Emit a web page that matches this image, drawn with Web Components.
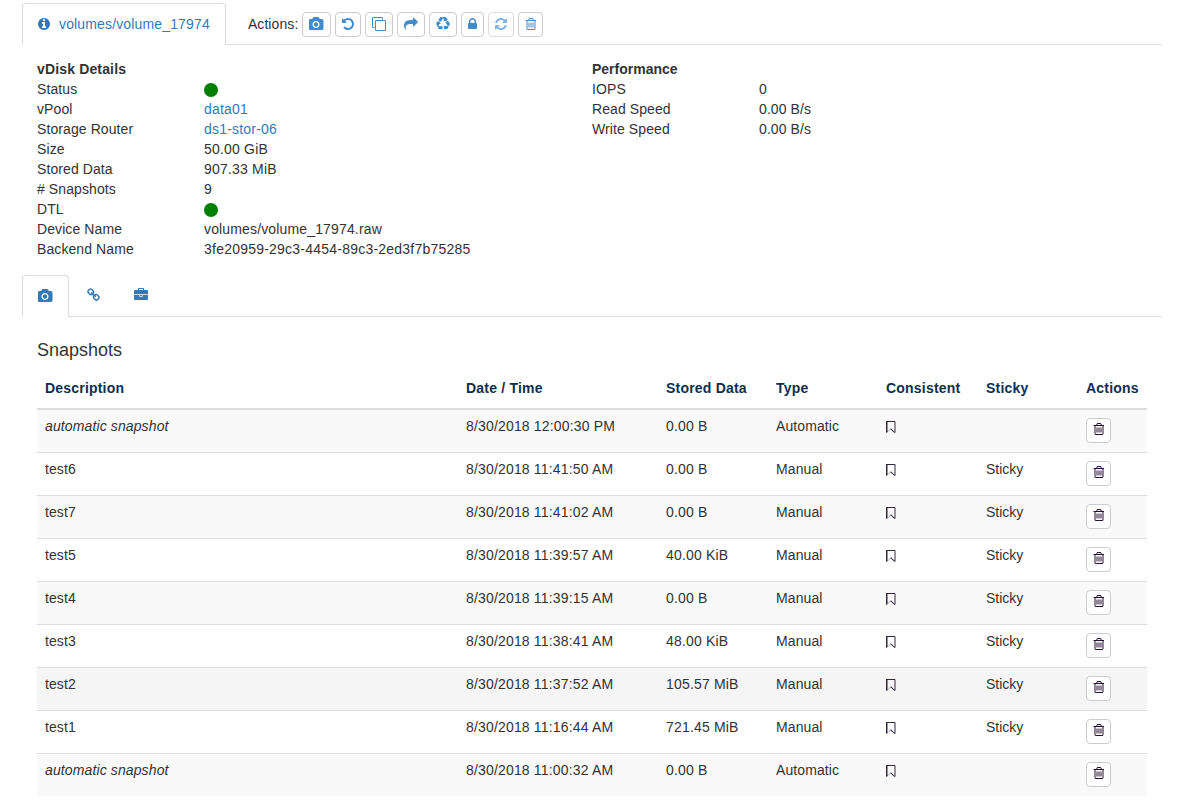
<!DOCTYPE html>
<html>
<head>
<meta charset="utf-8">
<title>volumes/volume_17974</title>
<style>
    html, body { margin: 0; padding: 0; background: #fff; }
    body { font: 14px/20px "Liberation Sans", Arial, sans-serif; color: #333; letter-spacing: .09px; }
</style>
</head>
<body>
<vd-page>
    <vd-tabbar first>
        <vd-tab active icon="info" label="volumes/volume_17974"></vd-tab>
        <vd-actions></vd-actions>
    </vd-tabbar>

    <vd-details></vd-details>

    <vd-tabbar second>
        <vd-tab active icon="camera"></vd-tab>
        <vd-tab icon="link"></vd-tab>
        <vd-tab icon="briefcase" style="margin-left:-1px"></vd-tab>
    </vd-tabbar>

    <vd-snapshots></vd-snapshots>
</vd-page>

<script>
const ICONS = {
    info: [1536, 'M1152 1376v-160q0-14-9-23t-23-9h-96v-512q0-14-9-23t-23-9h-320q-14 0-23 9t-9 23v160q0 14 9 23t23 9h96v320h-96q-14 0-23 9t-9 23v160q0 14 9 23t23 9h448q14 0 23-9t9-23zm-128-896v-160q0-14-9-23t-23-9h-192q-14 0-23 9t-9 23v160q0 14 9 23t23 9h192q14 0 23-9t9-23zm640 416q0 209-103 385.5t-279.5 279.5-385.5 103-385.5-103-279.5-279.5-103-385.5 103-385.5 279.5-279.5 385.5-103 385.5 103 279.5 279.5 103 385.5z', 128],
    camera: [1920, 'M896 672q119 0 203.5 84.5t84.5 203.5-84.5 203.5-203.5 84.5-203.5-84.5-84.5-203.5 84.5-203.5 203.5-84.5zm704-416q106 0 181 75t75 181v896q0 106-75 181t-181 75h-1408q-106 0-181-75t-75-181v-896q0-106 75-181t181-75h224l51-136q19-49 69.5-84.5t103.5-35.5h512q53 0 103.5 35.5t69.5 84.5l51 136h224zm-704 1152q185 0 316.5-131.5t131.5-316.5-131.5-316.5-316.5-131.5-316.5 131.5-131.5 316.5 131.5 316.5 316.5 131.5z', 0],
    undo: [1536, 'M1664 896q0 156-61 298t-164 245-245 164-298 61q-172 0-327-72.5t-264-204.5q-7-10-6.5-22.5t8.5-20.5l137-138q10-9 25-9 16 2 23 12 73 95 179 147t225 52q104 0 198.5-40.5t163.5-109.5 109.5-163.5 40.5-198.5-40.5-198.5-109.5-163.5-163.5-109.5-198.5-40.5q-98 0-188 35.5t-160 101.5l137 138q31 30 14 69-17 40-59 40h-448q-26 0-45-19t-19-45v-448q0-42 40-59 39-17 69 14l130 129q107-101 244.5-156.5t284.5-55.5q156 0 298 61t245 164 164 245 61 298z', 128],
    clone: [1792, 'M1664 1632v-1088q0-13-9.5-22.5t-22.5-9.5h-1088q-13 0-22.5 9.5t-9.5 22.5v1088q0 13 9.5 22.5t22.5 9.5h1088q13 0 22.5-9.5t9.5-22.5zm128-1088v1088q0 66-47 113t-113 47h-1088q-66 0-113-47t-47-113v-1088q0-66 47-113t113-47h1088q66 0 113 47t47 113zm-384-384v160h-128v-160q0-13-9.5-22.5t-22.5-9.5h-1088q-13 0-22.5 9.5t-9.5 22.5v1088q0 13 9.5 22.5t22.5 9.5h160v128h-160q-66 0-113-47t-47-113v-1088q0-66 47-113t113-47h1088q66 0 113 47t47 113z', 0],
    share: [1792, 'M1792 640q0 26-19 45l-512 512q-19 19-45 19t-45-19-19-45v-256h-224q-98 0-175.5 6t-154 21.5-133 42.5-105.5 69.5-80 101-48.5 138.5-17.5 181q0 55 5 123 0 6 2.5 23.5t2.5 26.5q0 15-8.5 25t-23.5 10q-16 0-28-17-7-9-13-22t-13.5-30-10.5-24q-127-285-127-451 0-199 53-333 162-403 875-403h224v-256q0-26 19-45t45-19 45 19l512 512q19 19 19 45z', 0],
    recycle: [1792, 'M836 1169l-15 368-2 22-420-29q-36-3-67-31.5t-47-65.5q-11-27-14.5-55t4-65 12-55 21.5-64 19-53q78 12 509 28zm-387-586l180 379-147-92q-63 72-111.5 144.5t-72.5 125-39.5 94.5-18.5 63l-4 21-190-357q-17-26-18-56t6-47l8-18q35-63 114-188l-140-86zm1231 517l-188 359q-12 29-36.5 46.5t-43.5 20.5l-18 4q-71 7-219 12l8 164-230-367 211-362 7 173q170 16 283 5t170-33zm-785-924q-47 63-265 435l-317-187-19-12 225-356q20-31 60-45t80-10q24 2 48.5 12t42 21 41.5 33 36 34.5 36 39.5 32 35zm655 307l212 363q18 37 12.5 76t-27.5 74q-13 20-33 37t-38 28-48.5 22-47 16-51.5 14-46 12q-34-72-265-436l313-195zm-143-226l142-83-220 373-419-20 151-86q-34-89-75-166t-75.5-123.5-64.5-80-47-46.5l-17-13 405 1q31-3 58 10.5t39 28.5l11 15q39 61 112 190z', 0],
    lock: [1152, 'M320 768h512v-192q0-106-75-181t-181-75-181 75-75 181v192zm832 96v576q0 40-28 68t-68 28h-960q-40 0-68-28t-28-68v-576q0-40 28-68t68-28h32v-192q0-184 132-316t316-132 316 132 132 316v192h32q40 0 68 28t28 68z', 0],
    refresh: [1536, 'M1639 1056q0 5-1 7-64 268-268 434.5t-478 166.5q-146 0-282.5-55t-243.5-157l-129 129q-19 19-45 19t-45-19-19-45v-448q0-26 19-45t45-19h448q26 0 45 19t19 45-19 45l-137 137q71 66 161 102t187 36q134 0 250-65t186-179q11-17 53-117 8-23 30-23h192q13 0 22.5 9.5t9.5 22.5zm25-800v448q0 26-19 45t-45 19h-448q-26 0-45-19t-19-45 19-45l138-138q-148-137-349-137-134 0-250 65t-186 179q-11 17-53 117-8 23-30 23h-199q-13 0-22.5-9.5t-9.5-22.5v-7q65-268 270-434.5t480-166.5q146 0 284 55.5t245 156.5l130-129q19-19 45-19t45 19 19 45z', 128],
    trash: [1408, 'M704 736v576q0 14-9 23t-23 9h-64q-14 0-23-9t-9-23v-576q0-14 9-23t23-9h64q14 0 23 9t9 23zm256 0v576q0 14-9 23t-23 9h-64q-14 0-23-9t-9-23v-576q0-14 9-23t23-9h64q14 0 23 9t9 23zm256 0v576q0 14-9 23t-23 9h-64q-14 0-23-9t-9-23v-576q0-14 9-23t23-9h64q14 0 23 9t9 23zm128 724v-948h-896v948q0 22 7 40.5t14.5 27 10.5 8.5h832q3 0 10.5-8.5t14.5-27 7-40.5zm-672-1076h448l-48-117q-7-9-17-11h-317q-10 2-17 11zm928 32v64q0 14-9 23t-23 9h-96v948q0 83-47 143.5t-113 60.5h-832q-66 0-113-58.5t-47-141.5v-952h-96q-14 0-23-9t-9-23v-64q0-14 9-23t23-9h309l70-167q15-37 54-63t79-26h320q40 0 79 26t54 63l70 167h309q14 0 23 9t9 23z', 128],
    bookmark: [1280, 'M1344 256h-896v1243l448-430 89 86 359 344v-1243zm12-128q23 0 44 9 33 13 52.5 41t19.5 62v1289q0 34-19.5 62t-52.5 41q-19 8-44 8-48 0-83-32l-441-424-441 424q-36 33-83 33-23 0-44-9-33-13-52.5-41t-19.5-62v-1289q0-34 19.5-62t52.5-41q21-9 44-9h1048z', 256],
    link: [1792, 'M1456 1216q0-40-28-68l-208-208q-28-28-68-28-42 0-72 32 3 3 19 18.5t21.5 21.5 15 19 13 25.5 3.5 27.5q0 40-28 68t-68 28q-15 0-27.5-3.5t-25.5-13-19-15-21.5-21.5-18.5-19q-33 31-33 73 0 40 28 68l206 207q27 27 68 27 40 0 68-26l147-146q28-28 28-67zm-703-705q0-40-28-68l-206-207q-28-28-68-28-39 0-68 27l-147 146q-28 28-28 67 0 40 28 68l208 208q27 27 68 27 42 0 72-31-3-3-19-18.5t-21.5-21.5-15-19-13-25.5-3.5-27.5q0-40 28-68t68-28q15 0 27.5 3.5t25.5 13 19 15 21.5 21.5 18.5 19q33-31 33-73zm895 705q0 120-85 203l-147 146q-83 83-203 83-121 0-204-85l-206-207q-83-83-83-203 0-123 88-209l-88-88q-86 88-208 88-120 0-204-84l-208-208q-84-84-84-204t85-203l147-146q83-83 203-83 121 0 204 85l206 207q83 83 83 203 0 123-88 209l88 88q86-88 208-88 120 0 204 84l208 208q84 84 84 204z', 0],
    briefcase: [1792, 'M640 256h512v-128h-512v128zm1152 640v480q0 66-47 113t-113 47h-1472q-66 0-113-47t-47-113v-480h672v160q0 26 19 45t45 19h320q26 0 45-19t19-45v-160h672zm-768 0v128h-256v-128h256zm768-480v384h-1792v-384q0-66 47-113t113-47h352v-160q0-40 28-68t68-28h576q40 0 68 28t28 68v160h352q66 0 113 47t47 113z', 0]
};

class VdIcon extends HTMLElement {
    constructor() {
        super();
        this.attachShadow({ mode: 'open' });
    }

    connectedCallback() {
        const [w, d, x] = ICONS[this.getAttribute('name')];
        const size = 14;
        this.shadowRoot.innerHTML = `
            <style>
                :host { display: inline-flex; color: inherit; line-height: 0; }
                svg { display: block; fill: currentColor; }
            </style>
            <svg width="${w / 1792 * size}" height="${size}" viewBox="${x} 0 ${w} 1792"><path d="${d}"/></svg>
        `;
    }
}
customElements.define('vd-icon', VdIcon);

class VdPage extends HTMLElement {
    constructor() {
        super();
        this.attachShadow({ mode: 'open' });
        this.shadowRoot.innerHTML = `
            <style>
                :host { display: block; width: 1140px; margin-left: 22px; padding-top: 3px; }
            </style>
            <slot></slot>
        `;
    }
}
customElements.define('vd-page', VdPage);

class VdTabbar extends HTMLElement {
    constructor() {
        super();
        this.attachShadow({ mode: 'open' });
        this.shadowRoot.innerHTML = `
            <style>
                :host { display: flex; align-items: flex-start; border-bottom: 1px solid #ddd; height: 41px; }
                :host([second]) { margin-top: 16px; gap: 2px; }
            </style>
            <slot></slot>
        `;
    }
}
customElements.define('vd-tabbar', VdTabbar);

class VdTab extends HTMLElement {
    constructor() {
        super();
        this.attachShadow({ mode: 'open' });
    }

    connectedCallback() {
        const label = this.getAttribute('label');
        this.shadowRoot.innerHTML = `
            <style>
                :host {
                    display: flex;
                    align-items: center;
                    gap: 9px;
                    box-sizing: border-box;
                    height: 41px;
                    padding: 0 15px 2px;
                    border: 1px solid transparent;
                    border-bottom: 0;
                    border-radius: 4px 4px 0 0;
                    color: #337ab7;
                    letter-spacing: .15px;
                }
                :host([active]) { border-color: #ddd; background: #fff; height: 42px; }
            </style>
            <vd-icon name="${this.getAttribute('icon')}"></vd-icon>
            ${label ? `<span>${label}</span>` : ''}
        `;
    }
}
customElements.define('vd-tab', VdTab);

class VdButton extends HTMLElement {
    constructor() {
        super();
        this.attachShadow({ mode: 'open' });
    }

    connectedCallback() {
        this.shadowRoot.innerHTML = `
            <style>
                :host {
                    display: inline-flex;
                    align-items: center;
                    justify-content: center;
                    box-sizing: border-box;
                    height: 25px;
                    padding-bottom: var(--btn-lift, 1px);
                    border: 1px solid #ccc;
                    border-radius: 4px;
                    background: #fff;
                    color: var(--btn-color, #428bca);
                }
                :host([disabled]) { opacity: .65; }
            </style>
            <vd-icon name="${this.getAttribute('icon')}"></vd-icon>
        `;
    }
}
customElements.define('vd-button', VdButton);

class VdActions extends HTMLElement {
    constructor() {
        super();
        this.attachShadow({ mode: 'open' });
        const buttons = [
            ['camera', 29], ['undo', 26], ['clone', 28], ['share', 28],
            ['recycle', 28], ['lock', 23], ['refresh', 26], ['trash', 25]
        ];
        this.shadowRoot.innerHTML = `
            <style>
                :host { display: flex; align-items: center; gap: 4px; margin-left: 22px; height: 25px; margin-top: 9px; }
                span { width: 50px; white-space: nowrap; position: relative; top: -1px; }
            </style>
            <span>Actions:</span>
            ${buttons.map(([icon, w]) => `<vd-button icon="${icon}" style="width:${w}px"${icon === 'refresh' ? ' disabled' : ''}></vd-button>`).join('')}
        `;
    }
}
customElements.define('vd-actions', VdActions);

class VdDetailRow extends HTMLElement {
    constructor() {
        super();
        this.attachShadow({ mode: 'open' });
    }

    connectedCallback() {
        this.shadowRoot.innerHTML = `
            <style>
                :host { display: flex; height: 20px; align-items: center; }
                .label { width: 167px; flex: none; }
            </style>
            <div class="label">${this.getAttribute('label')}</div>
            <slot></slot>
        `;
    }
}
customElements.define('vd-detail-row', VdDetailRow);

class VdDot extends HTMLElement {
    constructor() {
        super();
        this.attachShadow({ mode: 'open' });
        this.shadowRoot.innerHTML = `
            <style>
                :host { display: block; width: 14px; height: 14px; border-radius: 50%; background: #008000; margin-top: 2px; }
            </style>
        `;
    }
}
customElements.define('vd-dot', VdDot);

class VdDetails extends HTMLElement {
    constructor() {
        super();
        this.attachShadow({ mode: 'open' });
        this.shadowRoot.innerHTML = `
            <style>
                :host { display: grid; grid-template-columns: 555px 1fr; padding: 14px 0 0 15px; height: 200px; }
                h4 { margin: 0; font: bold 14px/20px "Liberation Sans", Arial, sans-serif; letter-spacing: .15px; }
                section:last-child h4 { letter-spacing: 0; }
                a { color: #337ab7; text-decoration: none; }
                .digits { letter-spacing: .2px; }
                .uuid { letter-spacing: .225px; }
            </style>
            <section>
                <h4>vDisk Details</h4>
                <vd-detail-row label="Status"><vd-dot></vd-dot></vd-detail-row>
                <vd-detail-row label="vPool"><a href="#" class="digits">data01</a></vd-detail-row>
                <vd-detail-row label="Storage Router"><a href="#" class="digits">ds1-stor-06</a></vd-detail-row>
                <vd-detail-row label="Size"><span class="digits">50.00 GiB</span></vd-detail-row>
                <vd-detail-row label="Stored Data"><span class="digits">907.33 MiB</span></vd-detail-row>
                <vd-detail-row label="# Snapshots">9</vd-detail-row>
                <vd-detail-row label="DTL"><vd-dot></vd-dot></vd-detail-row>
                <vd-detail-row label="Device Name"><span style="letter-spacing:.15px">volumes/volume_17974.raw</span></vd-detail-row>
                <vd-detail-row label="Backend Name"><span class="uuid">3fe20959-29c3-4454-89c3-2ed3f7b75285</span></vd-detail-row>
            </section>
            <section>
                <h4>Performance</h4>
                <vd-detail-row label="IOPS">0</vd-detail-row>
                <vd-detail-row label="Read Speed">0.00 B/s</vd-detail-row>
                <vd-detail-row label="Write Speed">0.00 B/s</vd-detail-row>
            </section>
        `;
    }
}
customElements.define('vd-details', VdDetails);

const COLUMNS = '421px 200px 110px 110px 100px 100px 69px';

class VdSnapshotRow extends HTMLElement {
    constructor() {
        super();
        this.attachShadow({ mode: 'open' });
    }

    connectedCallback() {
        const get = name => this.getAttribute(name) || '';
        this.shadowRoot.innerHTML = `
            <style>
                :host {
                    display: grid;
                    grid-template-columns: ${COLUMNS};
                    height: 42px;
                    border-top: 1px solid #ddd;
                    color: #333;
                }
                :host([odd]) { background: #f9f9f9; }
                :host([hover]) { background: #f5f5f5; }
                :host([first]) { border-top: 0; }
                div { padding: 6px 8px 0; }
                :host([auto]) .desc { font-style: italic; letter-spacing: .12px; }
                .date { letter-spacing: .17px; }
                .size { letter-spacing: .18px; }
                .sticky { letter-spacing: 0; }
                .mark { color: #33283d; padding-top: 9px; }
                .act { padding-top: 8px; --btn-color: #2a0f35; --btn-lift: 3px; }
            </style>
            <div class="desc">${get('desc')}</div>
            <div class="date">${get('date')}</div>
            <div class="size">${get('size')}</div>
            <div>${get('type')}</div>
            <div class="mark"><vd-icon name="bookmark"></vd-icon></div>
            <div class="sticky">${get('sticky')}</div>
            <div class="act"><vd-button icon="trash" style="width:25px"></vd-button></div>
        `;
    }
}
customElements.define('vd-snapshot-row', VdSnapshotRow);

class VdSnapshots extends HTMLElement {
    constructor() {
        super();
        this.attachShadow({ mode: 'open' });
        const rows = [
            ['automatic snapshot', '8/30/2018 12:00:30 PM', '0.00 B', 'Automatic', ''],
            ['test6', '8/30/2018 11:41:50 AM', '0.00 B', 'Manual', 'Sticky'],
            ['test7', '8/30/2018 11:41:02 AM', '0.00 B', 'Manual', 'Sticky'],
            ['test5', '8/30/2018 11:39:57 AM', '40.00 KiB', 'Manual', 'Sticky'],
            ['test4', '8/30/2018 11:39:15 AM', '0.00 B', 'Manual', 'Sticky'],
            ['test3', '8/30/2018 11:38:41 AM', '48.00 KiB', 'Manual', 'Sticky'],
            ['test2', '8/30/2018 11:37:52 AM', '105.57 MiB', 'Manual', 'Sticky'],
            ['test1', '8/30/2018 11:16:44 AM', '721.45 MiB', 'Manual', 'Sticky'],
            ['automatic snapshot', '8/30/2018 11:00:32 AM', '0.00 B', 'Automatic', '']
        ];
        const attrs = i => [
            i === 0 ? 'first' : '',
            i % 2 === 0 ? 'odd' : '',
            i === 6 ? 'hover' : '',
            rows[i][3] === 'Automatic' ? 'auto' : ''
        ].join(' ');
        this.shadowRoot.innerHTML = `
            <style>
                :host { display: block; padding: 23px 15px 0; width: 1110px; }
                h4 { margin: 0 0 10px; font: 18px/20px "Liberation Sans", Arial, sans-serif; letter-spacing: 0; color: #333; }
                .head {
                    display: grid;
                    grid-template-columns: ${COLUMNS};
                    border-bottom: 2px solid #ddd;
                    font-weight: bold;
                    letter-spacing: .2px;
                    color: #0d2f4f;
                }
                .head div { padding: 8px 8px 10px; }
            </style>
            <h4>Snapshots</h4>
            <div class="head">
                <div>Description</div><div>Date / Time</div><div>Stored Data</div><div>Type</div>
                <div>Consistent</div><div>Sticky</div><div>Actions</div>
            </div>
            ${rows.map((r, i) => `<vd-snapshot-row ${attrs(i)} desc="${r[0]}" date="${r[1]}" size="${r[2]}" type="${r[3]}" sticky="${r[4]}"></vd-snapshot-row>`).join('')}
        `;
    }
}
customElements.define('vd-snapshots', VdSnapshots);
</script>
</body>
</html>
